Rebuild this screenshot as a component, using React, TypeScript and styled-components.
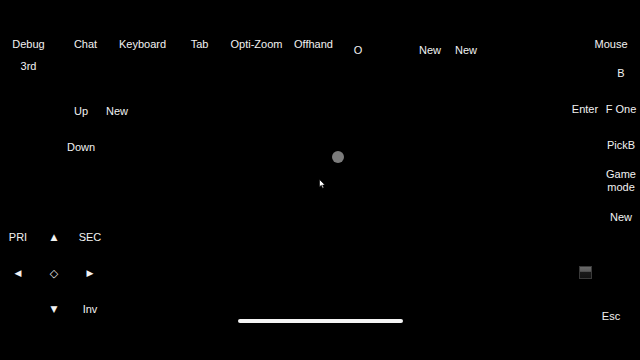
import React from "react";
import styled, { createGlobalStyle } from "styled-components";

const Global = createGlobalStyle`
  html, body { margin: 0; padding: 0; background: #000; }
  body { font-family: "Liberation Sans", Arial, sans-serif; }
`;

const Canvas = styled.div`
  position: relative;
  width: 640px;
  height: 360px;
  background: #000;
  overflow: hidden;
  color: #f2f2f2;
  font-size: 11px;
  line-height: 13px;
`;

/* a control group placed on the free overlay canvas */
const Group = styled.div<{ $x: number; $y: number }>`
  position: absolute;
  left: ${(p) => p.$x}px;
  top: ${(p) => p.$y}px;
`;

const Row = styled.div<{ $cell: number }>`
  display: flex;
  & > * { width: ${(p) => p.$cell}px; }
`;

const Grid = styled.div<{ $cols: number; $cell: number }>`
  display: grid;
  grid-template-columns: repeat(${(p) => p.$cols}, ${(p) => p.$cell}px);
  grid-auto-rows: ${(p) => p.$cell}px;
`;

const Key = styled.div<{ $h?: number; $w?: number }>`
  display: flex;
  align-items: center;
  justify-content: center;
  text-align: center;
  white-space: nowrap;
  height: ${(p) => p.$h ?? 26}px;
  ${(p) => (p.$w ? `width: ${p.$w}px;` : "")}
  ${Grid} & { height: auto; }
`;

const Arrow = styled(Key)<{ $size?: number }>`
  font-family: "DejaVu Sans", sans-serif;
  font-size: ${(p) => p.$size ?? 9}px;
`;

const Dot = styled.div`
  position: absolute;
  left: 332px;
  top: 151px;
  width: 12px;
  height: 12px;
  border-radius: 50%;
  background: #7c7c7c;
`;

const Cursor = styled.svg`
  position: absolute;
  left: 319px;
  top: 179px;
`;

const Square = styled.div`
  position: absolute;
  left: 579px;
  top: 266px;
  width: 13px;
  height: 13px;
  box-sizing: border-box;
  border: 1px solid #3a3a3a;
  background: linear-gradient(#6a6a6a 0, #5a5a5a 40%, #1a1a1a 45%, #141414 100%);
`;

const HomeBar = styled.div`
  position: absolute;
  left: 238px;
  bottom: 37px;
  width: 165px;
  height: 4px;
  border-radius: 2px;
  background: #f4f4f4;
`;

const topKeys = ["Debug", "Chat", "Keyboard", "Tab", "Opti-Zoom", "Offhand"];

export default function App() {
  return (
    <>
      <Global />
      <Canvas>
        <Group $x={0} $y={31}>
          <Row $cell={57}>
            {topKeys.map((k) => (
              <Key key={k}>{k}</Key>
            ))}
          </Row>
          <Row $cell={57}>
            <Key $h={18}>3rd</Key>
          </Row>
        </Group>

        <Group $x={340} $y={37}>
          <Row $cell={36}>
            <Key>O</Key>
            <span />
            <Key>New</Key>
            <Key>New</Key>
          </Row>
        </Group>

        <Group $x={63} $y={93}>
          <Grid $cols={2} $cell={36}>
            <Key>Up</Key>
            <Key>New</Key>
            <Key>Down</Key>
          </Grid>
        </Group>

        <Group $x={0} $y={219}>
          <Grid $cols={3} $cell={36}>
            <Key>PRI</Key>
            <Arrow>▲</Arrow>
            <Key>SEC</Key>
            <Arrow>◀</Arrow>
            <Arrow $size={11}>◇</Arrow>
            <Arrow>▶</Arrow>
            <span />
            <Arrow>▼</Arrow>
            <Key>Inv</Key>
          </Grid>
        </Group>

        <Group $x={592} $y={31}>
          <Key $w={38}>Mouse</Key>
        </Group>

        <Group $x={567} $y={55}>
          <Grid $cols={2} $cell={36}>
            <span />
            <Key>B</Key>
            <Key>Enter</Key>
            <Key>F One</Key>
            <span />
            <Key>PickB</Key>
            <span />
            <Key>
              Game
              <br />
              mode
            </Key>
            <span />
            <Key>New</Key>
          </Grid>
        </Group>

        <Group $x={592} $y={303}>
          <Key $w={38}>Esc</Key>
        </Group>

        <Dot />
        <Cursor width="7" height="10" viewBox="0 0 7 10">
          <path d="M0.5 0.5 L0.5 8 L2.3 6.3 L3.6 9.3 L4.8 8.8 L3.6 6 L6 6 Z" fill="#fff" stroke="#000" strokeWidth="0.6" />
        </Cursor>
        <Square />
        <HomeBar />
      </Canvas>
    </>
  );
}
